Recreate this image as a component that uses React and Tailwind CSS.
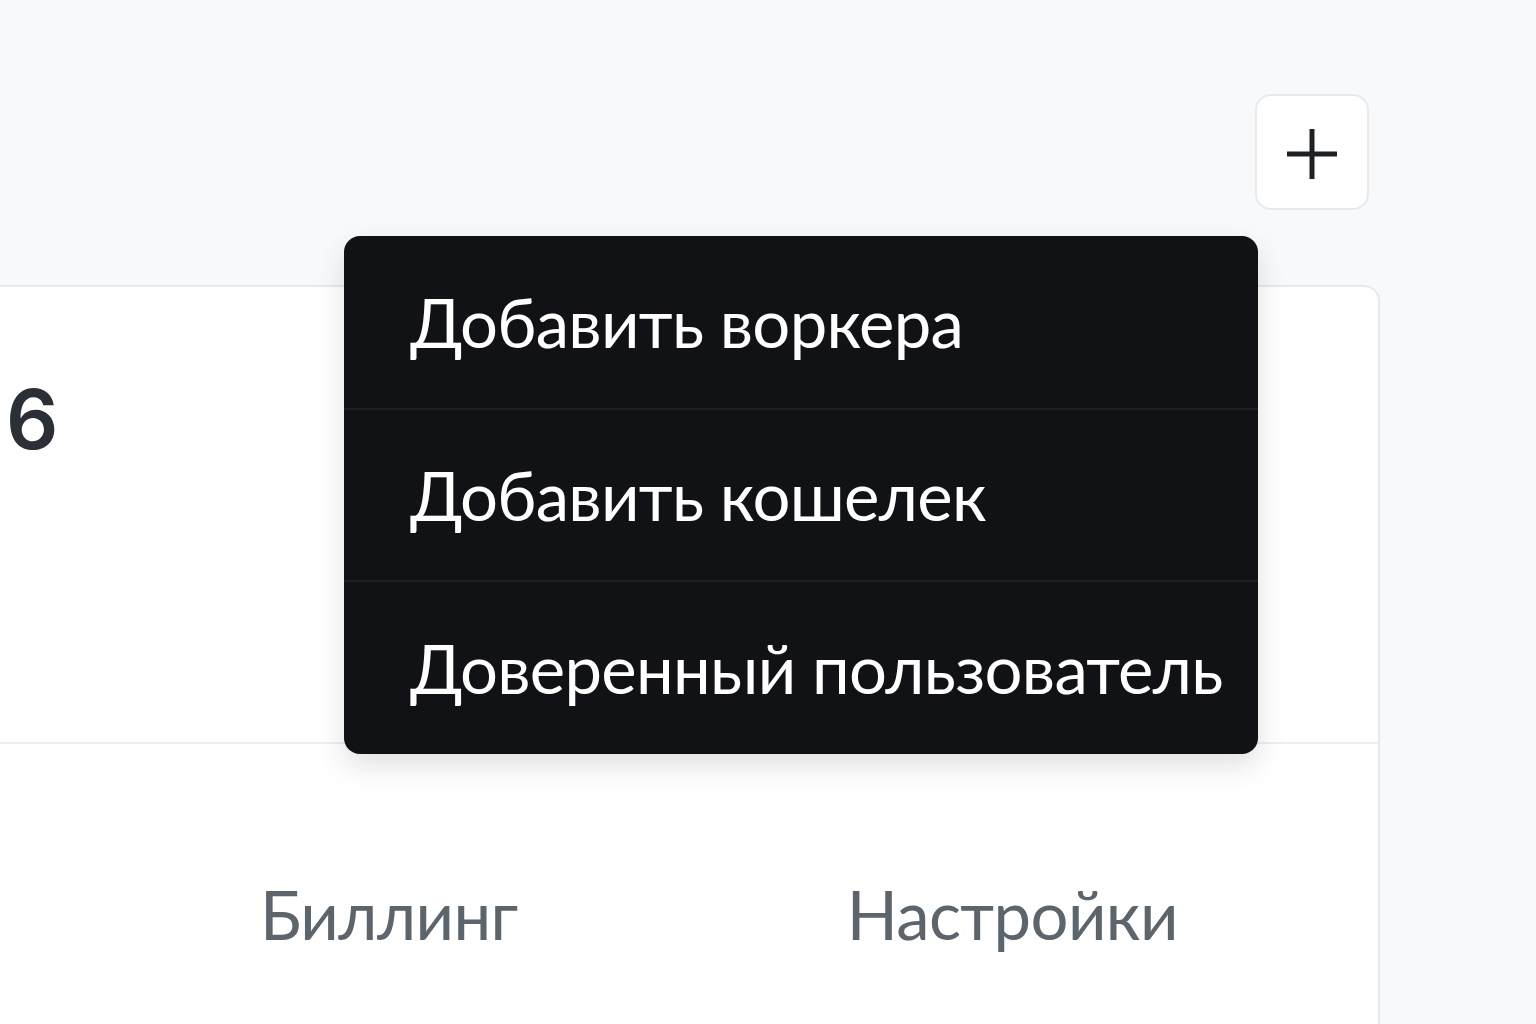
// Add-menu opened over the account card
const FONT = { fontFamily: 'Lato, "Noto Sans", sans-serif' };

const ITEMS = ["Добавить воркера", "Добавить кошелек", "Доверенный пользователь"];

function PlusIcon() {
  return (
    <svg width="50" height="50" viewBox="0 0 50 50" fill="none">
      <path d="M25 0v50M0 25h50" stroke="#1d2024" strokeWidth="5" />
    </svg>
  );
}

function AddMenu() {
  return (
    <div className="absolute left-[344px] top-[236px] w-[914px] rounded-2xl bg-[#111215] shadow-[0_12px_30px_rgba(0,0,0,0.12)] overflow-hidden">
      {ITEMS.map((label, i) => (
        <div
          key={label}
          className={
            "flex items-center whitespace-nowrap pl-[66px] text-[67px] tracking-[-0.7px] text-white " +
            (i > 0 ? "border-t-2 border-[#1d1f23] " : "") +
            (i === 2 ? "h-[174px]" : "h-[172px]")
          }
        >
          {label}
        </div>
      ))}
    </div>
  );
}

export default function App() {
  return (
    <div
      className="relative h-[1024px] w-[1536px] overflow-hidden bg-[#f8f9fa]"
      style={FONT}
    >
      <div className="flex h-[285px] justify-end pr-[167px] pt-[94px]">
        <button className="flex h-[116px] w-[114px] items-center justify-center rounded-2xl border-2 border-[#e7e9ec] bg-white pt-1">
          <PlusIcon />
        </button>
      </div>

      <div className="-ml-5 w-[1400px] rounded-tr-2xl border-2 border-[#e7e9ec] bg-white">
        <div className="h-[457px] border-b-2 border-[#eceef0] pl-6 pt-[92px]">
          <span
            className="text-[82px] font-semibold leading-none text-[#2b3036]"
            style={{ fontFamily: 'Inter, "Noto Sans", sans-serif' }}
          >
            6
          </span>
        </div>
        <div className="flex h-[300px] gap-[329px] pl-[278px] pt-[120px] text-[67px] tracking-[-0.6px] text-[#5c646c]">
          <span>Биллинг</span>
          <span>Настройки</span>
        </div>
      </div>

      <AddMenu />
    </div>
  );
}
